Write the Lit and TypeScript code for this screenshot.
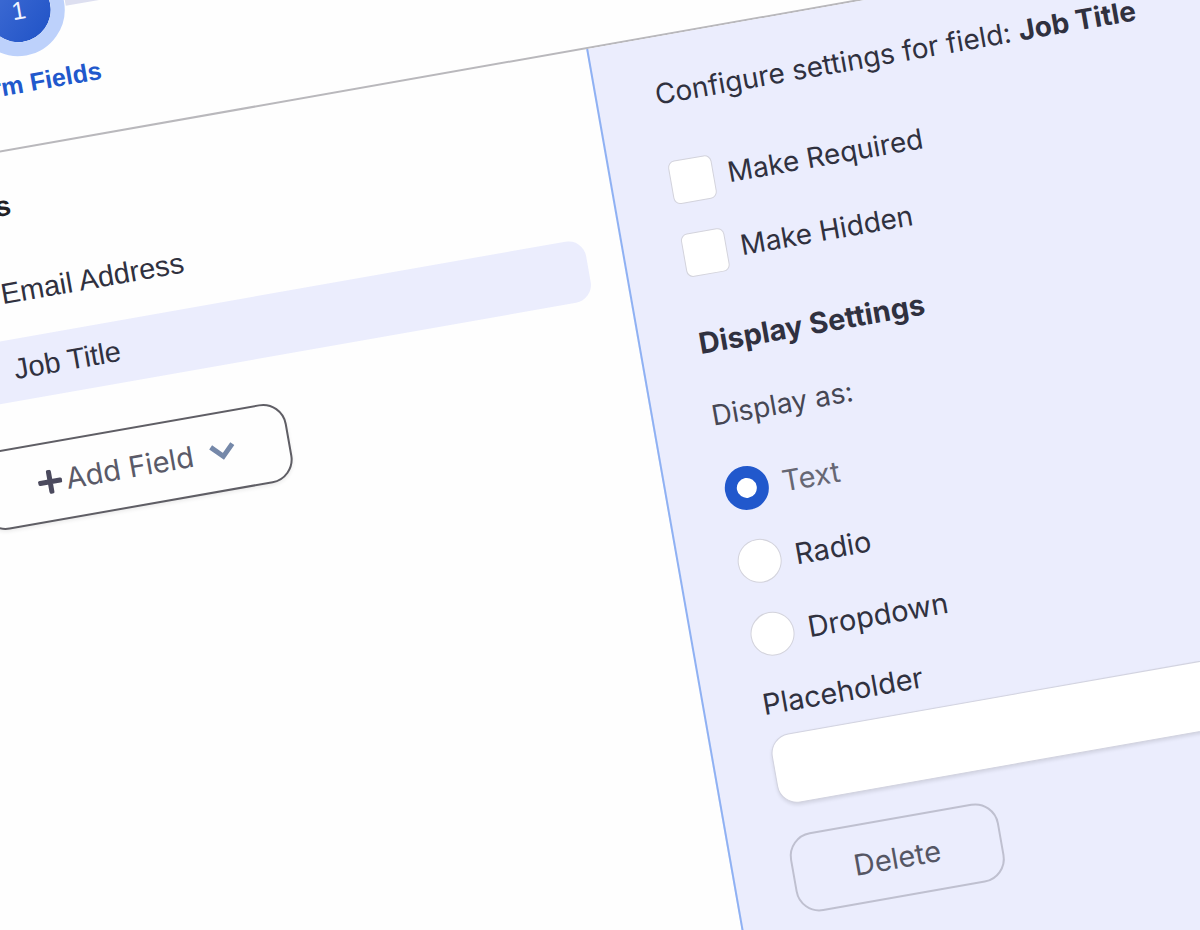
import { LitElement, html, css } from 'lit';
import { customElement, state } from 'lit/decorators.js';

const DISPLAY_TYPES = ['Text', 'Radio', 'Dropdown'];
const FIELDS = ['Email Address', 'Job Title'];

@customElement('app-root')
export class AppRoot extends LitElement {
  @state() private selected = 'Job Title';
  @state() private display = 'Text';

  static styles = css`
    :host {
      display: block;
      height: 100vh;
      overflow: hidden;
      background: #fefefe;
      color: #30313f;
      font-family: Inter, 'Open Sans', sans-serif;
      font-size: 29px;
      line-height: 35px;
    }
    * { box-sizing: border-box; }
    h2, h3, p, ul { margin: 0; padding: 0; }
    button, input { font: inherit; color: inherit; margin: 0; }

    /* The whole builder is shown tilted around the corner of the settings pane */
    .canvas {
      display: flow-root;
      margin: -151px -260px 0 -173px;
      transform: rotate(-10deg);
      transform-origin: 760px 199px;
    }
    .stepper {
      display: flex;
      align-items: flex-start;
      height: 200px;
      padding: 16px 0 0 136px;
      border-bottom: 2px solid #b9b8bc;
      font-family: 'Liberation Sans', sans-serif;
    }
    .step {
      display: flex;
      flex-direction: column;
      align-items: center;
      gap: 12px;
      color: #2158cc;
      font-size: 25px;
      font-weight: 700;
      line-height: 30px;
    }
    .dot {
      display: grid;
      place-items: center;
      width: 93px;
      height: 93px;
      border: 14px solid #bdd1fb;
      border-radius: 50%;
      background: linear-gradient(135deg, #4470d6, #1f52c6) padding-box;
      color: #f2f5ff;
      font-weight: 400;
    }
    .track {
      flex: 1;
      height: 6px;
      margin: 45px 0 0 -24px;
      background: #dddff0;
    }

    .body {
      display: grid;
      grid-template-columns: 759px 1fr;
    }
    .fields {
      display: flex;
      flex-direction: column;
      align-items: flex-start;
      padding: 38px 36px 0 84px;
      font-family: 'Liberation Sans', sans-serif;
      line-height: 34px;
    }
    .fields h2 {
      margin-bottom: 40px;
      color: #222226;
      font-size: 28px;
      line-height: 32px;
    }
    .list {
      display: grid;
      gap: 14px;
      width: 100%;
      margin-bottom: 45px;
      list-style: none;
    }
    .row {
      display: block;
      width: 100%;
      height: 62px;
      padding: 0 0 2px 56px;
      border: 0;
      border-radius: 18px;
      background: none;
      text-align: left;
    }
    .row.on { background: #ebedfd; }
    .add {
      display: flex;
      align-items: center;
      height: 80px;
      padding: 0 53px 0 58px;
      border: 2px solid #5f5e65;
      border-radius: 24px;
      background: #fefefe;
      box-shadow: 0 2px 4px #00000012;
      color: #5a5a68;
      font-family: Inter, sans-serif;
    }
    .plus { width: 24px; height: 24px; margin-right: 4px; }
    .chevron { width: 26px; height: 24px; margin-left: 16px; }

    .settings {
      display: flex;
      flex-direction: column;
      align-items: flex-start;
      padding: 40px 60px 130px 58px;
      border-left: 2px solid #8fb1f3;
      background: #ebedfd;
    }
    .intro {
      margin-bottom: 51px;
      font-size: 28px;
      line-height: 34px;
      white-space: nowrap;
    }
    .options {
      display: grid;
      gap: 30px;
      margin: 0;
      padding: 0;
      border: 0;
    }
    .option {
      display: flex;
      align-items: center;
      gap: 14px;
    }
    .option.check { font-size: 28px; line-height: 34px; }
    .option.check span, .option.radio span { padding-bottom: 2px; }
    .option.picked { color: #666774; }
    .option input {
      appearance: none;
      width: 44px;
      height: 44px;
      border: 1px solid #d3d3dc;
      border-radius: 7px;
      background: #fff;
    }
    .option.radio input { border-radius: 50%; }
    .option.check input:checked { background: #2158cc; }
    .option.radio input:checked { border: 12px solid #2158cc; }
    .settings h3 {
      margin: 49px 0 39px;
      font-size: 29px;
      font-weight: 700;
    }
    .sub { margin-bottom: 37px; padding: 0; color: #464754; font-size: 28px; }
    .caption { margin: 29px 0 15px; }
    .entry {
      width: 100%;
      height: 70px;
      margin-bottom: 31px;
      padding: 0 24px;
      border: 1px solid #d2d3e0;
      border-radius: 20px;
      background: #fff;
      box-shadow: 0 2px 4px #0000001c;
    }
    .delete {
      height: 80px;
      padding: 0 60px;
      border: 2px solid #bfc0d0;
      border-radius: 24px;
      background: none;
      color: #555664;
    }
  `;

  render() {
    return html`
      <main class="canvas">
        <header class="stepper">
          <div class="step"><span class="dot">1</span>Form Fields</div>
          <div class="track"></div>
        </header>
        <div class="body">
          <section class="fields">
            <h2>Fields</h2>
            <ul class="list">
              ${FIELDS.map(
                (name) => html`<li>
                  <button class="row ${name === this.selected ? 'on' : ''}" @click=${() => (this.selected = name)}>${name}</button>
                </li>`
              )}
            </ul>
            <button class="add">
              <svg class="plus" viewBox="0 0 24 24" fill="none" stroke="#4b4a5e" stroke-width="5" stroke-linecap="round" aria-hidden="true">
                <path d="M12 2v20M2 12h20" />
              </svg>
              Add Field
              <svg class="chevron" viewBox="0 0 26 24" fill="none" stroke="#7588a9" stroke-width="5" aria-hidden="true">
                <path d="M2 6l11 11L24 6" />
              </svg>
            </button>
          </section>
          <section class="settings">
            <p class="intro">Configure settings for field: <b>${this.selected}</b></p>
            <div class="options">
              <label class="option check"><input type="checkbox" /><span>Make Required</span></label>
              <label class="option check"><input type="checkbox" /><span>Make Hidden</span></label>
            </div>
            <h3>Display Settings</h3>
            <p class="sub" id="display-as">Display as:</p>
            <div class="options" role="radiogroup" aria-labelledby="display-as">
              ${DISPLAY_TYPES.map(
                (type) => html`<label class="option radio ${type === this.display ? 'picked' : ''}">
                  <input type="radio" name="display" .checked=${type === this.display} @change=${() => (this.display = type)} />
                  <span>${type}</span>
                </label>`
              )}
            </div>
            <label class="caption" for="placeholder">Placeholder</label>
            <input class="entry" id="placeholder" type="text" />
            <button class="delete">Delete</button>
          </section>
        </div>
      </main>
    `;
  }
}
